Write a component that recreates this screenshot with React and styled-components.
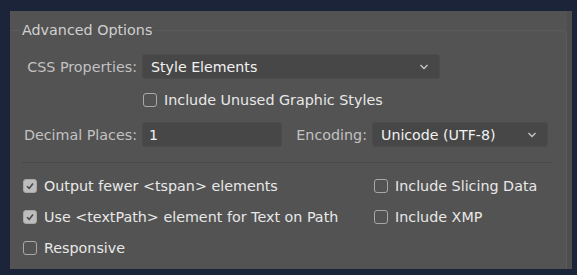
import React from "react";
import styled, { createGlobalStyle } from "styled-components";

const GlobalStyle = createGlobalStyle`
  html, body {
    margin: 0;
    padding: 0;
    background: #1b2439;
  }
  body {
    font-family: "DejaVu Sans", "Noto Sans", sans-serif;
    -webkit-font-smoothing: antialiased;
  }
`;

const Page = styled.div`
  width: 577px;
  height: 275px;
  padding: 11px 5px 6px 10px;
  box-sizing: border-box;
`;

const Panel = styled.div`
  height: 258px;
  background: #535353;
  border-right: 5px solid #4e4e4e;
  box-sizing: border-box;
  position: relative;
`;

const Group = styled.div`
  position: absolute;
  top: 19px;
  left: 0;
  right: 0;
  bottom: 0;
  border: 1px solid #5b5b5b;
  border-left: none;
  border-bottom: none;
  border-top-right-radius: 5px;
  pointer-events: none;
`;

const Legend = styled.div`
  position: relative;
  display: inline-block;
  margin-left: 10px;
  padding: 11px 2px 0 2px;
  background: #535353;
  font-size: 14.3px;
  color: #d0d0d0;
  line-height: 17px;
  z-index: 1;
`;

const Body = styled.div`
  padding: 15px 0 0 12px;
  display: flex;
  flex-direction: column;
`;

const Row = styled.div`
  display: flex;
  align-items: center;
  height: ${(p) => p.$h || 25}px;
  margin-top: ${(p) => p.$mt || 0}px;
  padding-left: ${(p) => p.$pl || 0}px;
`;

const Label = styled.span`
  font-size: 14.3px;
  color: #c2c2c2;
  width: ${(p) => (p.$w ? p.$w + "px" : "auto")};
  text-align: right;
  margin-right: 5px;
  white-space: nowrap;
`;

const Field = styled.div`
  display: flex;
  align-items: center;
  justify-content: space-between;
  box-sizing: border-box;
  width: ${(p) => p.$w}px;
  height: 25px;
  padding: 0 10px 0 ${(p) => p.$pl || 8}px;
  background: #474747;
  border: 1px solid #4c4c4c;
  border-radius: 3px;
  font-size: 14.2px;
  color: #f2f2f2;
`;

const Chevron = () => (
  <svg width="10" height="6" viewBox="0 0 10 6">
    <path d="M1.5 1 L5 4.5 L8.5 1" fill="none" stroke="#c8c8c8" strokeWidth="1.3" />
  </svg>
);

const Box = styled.span`
  width: 14px;
  height: 14px;
  box-sizing: border-box;
  border: 1px solid #a8a8a8;
  border-radius: 3px;
  background: ${(p) => (p.$on ? "#bdbdbd" : "transparent")};
  display: inline-flex;
  align-items: center;
  justify-content: center;
  margin-right: 7px;
  flex-shrink: 0;
`;

const CheckText = styled.span`
  font-size: 14.3px;
  color: #e8e8e8;
  white-space: nowrap;
`;

const CheckItem = styled.div`
  display: flex;
  align-items: center;
`;

const Check = ({ on, children }) => (
  <CheckItem>
    <Box $on={on}>
      {on && (
        <svg width="10" height="10" viewBox="0 0 10 10">
          <path d="M2 5.2 L4.2 7.4 L8 2.6" fill="none" stroke="#4a4a4a" strokeWidth="1.6" />
        </svg>
      )}
    </Box>
    <CheckText>{children}</CheckText>
  </CheckItem>
);

const Divider = styled.div`
  height: 1px;
  background: #4a4a4a;
  margin: 15px 14px 0 0;
`;

const Columns = styled.div`
  display: grid;
  grid-template-columns: 351px 1fr;
  grid-auto-rows: 31px;
  align-items: center;
  padding-left: 1px;
  margin-top: 7px;
`;

export default function App() {
  return (
    <>
      <GlobalStyle />
      <Page>
        <Panel>
          <Group />
          <Legend>Advanced Options</Legend>
          <Body>
            <Row>
              <Label $w={115}>CSS Properties:</Label>
              <Field $w={298}>
                Style Elements
                <Chevron />
              </Field>
            </Row>
            <Row $mt={8} $pl={121}>
              <Check>Include Unused Graphic Styles</Check>
            </Row>
            <Row $mt={10}>
              <Label $w={115}>Decimal Places:</Label>
              <Field $w={140} $pl={6}>1</Field>
              <Label $w={85}>Encoding:</Label>
              <Field $w={176}>
                Unicode (UTF-8)
                <Chevron />
              </Field>
            </Row>
            <Divider />
            <Columns>
              <Check on>Output fewer &lt;tspan&gt; elements</Check>
              <Check>Include Slicing Data</Check>
              <Check on>Use &lt;textPath&gt; element for Text on Path</Check>
              <Check>Include XMP</Check>
              <Check>Responsive</Check>
            </Columns>
          </Body>
        </Panel>
      </Page>
    </>
  );
}
